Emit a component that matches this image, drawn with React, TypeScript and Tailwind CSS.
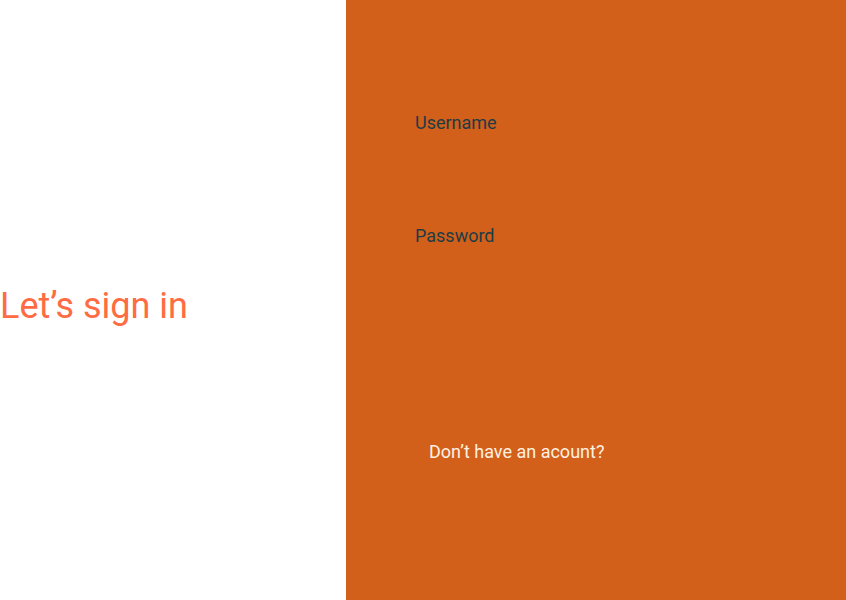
export default function App() {
  return (
    <main className="flex min-h-screen bg-white font-['Roboto',sans-serif] text-lg leading-6">
      <section className="flex flex-1 items-center pt-3">
        <h1 className="text-4xl whitespace-nowrap text-[#ff6b42]">Let’s sign in</h1>
      </section>
      <section className="w-[500px] bg-[#d2601a] px-[69px] pt-[111px]">
        <form className="flex flex-col gap-[41px] text-[#1d3c45]">
          <div>
            <label htmlFor="username" className="block">Username</label>
            <input
              id="username"
              type="text"
              className="block h-12 w-full bg-transparent outline-none"
            />
          </div>
          <div>
            <label htmlFor="password" className="block">Password</label>
            <input
              id="password"
              type="password"
              className="block h-12 w-full bg-transparent outline-none"
            />
          </div>
        </form>
        <p className="mt-36 pl-3.5 text-[#fff1e1]">Don’t have an acount?</p>
      </section>
    </main>
  );
}
